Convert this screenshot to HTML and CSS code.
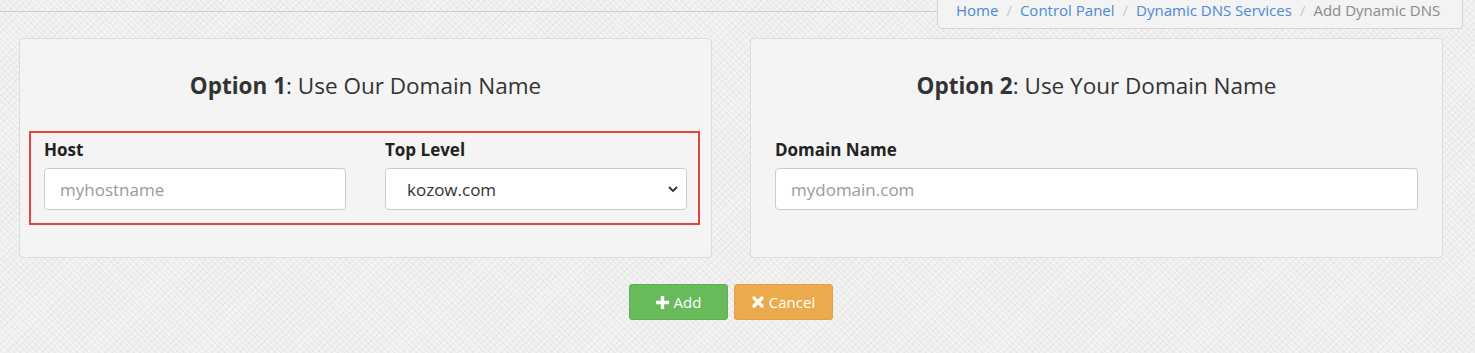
FILE: index.html
```html
<!DOCTYPE html>
<html>
<head>
<meta charset="utf-8">
<link rel="stylesheet" href="styles.css">
</head>
<body>
<div class="page">
  <div class="topbar">
    <div class="topline"></div>
    <ol class="breadcrumb">
      <li><a>Home</a></li>
      <li class="sep">/</li>
      <li><a>Control Panel</a></li>
      <li class="sep">/</li>
      <li><a>Dynamic DNS Services</a></li>
      <li class="sep">/</li>
      <li class="active">Add Dynamic DNS</li>
    </ol>
  </div>
  <div class="panels">
    <div class="panel">
      <h3 class="title"><b>Option 1</b>: Use Our Domain Name</h3>
      <div class="highlight">
        <div class="field">
          <label>Host</label>
          <input class="control" type="text" placeholder="myhostname">
        </div>
        <div class="field">
          <label>Top Level</label>
          <div class="select">
            <span>kozow.com</span>
            <svg class="chev" width="10" height="8" viewBox="0 0 10 8"><path d="M1 2 L5 6 L9 2" fill="none" stroke="#333" stroke-width="1.8"/></svg>
          </div>
        </div>
      </div>
    </div>
    <div class="panel panel2">
      <h3 class="title"><b>Option 2</b>: Use Your Domain Name</h3>
      <div class="field wide">
        <label>Domain Name</label>
        <input class="control" type="text" placeholder="mydomain.com">
      </div>
    </div>
  </div>
  <div class="actions">
    <button class="btn btn-add"><svg width="13" height="13" viewBox="0 0 13 13"><path d="M4.8 0h3.4v4.8H13v3.4H8.2V13H4.8V8.2H0V4.8h4.8z" fill="#fff"/></svg>Add</button>
    <button class="btn btn-cancel"><svg width="12" height="12" viewBox="0 0 12 12"><path d="M2 2 L10 10 M10 2 L2 10" stroke="#fff" stroke-width="3.2" stroke-linecap="round"/></svg>Cancel</button>
  </div>
</div>
</body>
</html>
```

FILE: styles.css
```css
html, body {
  margin: 0;
  padding: 0;
}
body {
  background-color: #ededed;
  background-image:
    repeating-linear-gradient(45deg, rgba(255,255,255,0.25) 0 2px, rgba(0,0,0,0.012) 2px 4px),
    repeating-linear-gradient(-45deg, rgba(255,255,255,0.2) 0 3px, rgba(0,0,0,0.01) 3px 5px);
  font-family: "Open Sans", "Noto Sans", sans-serif;
  color: #333;
  width: 1475px;
  height: 353px;
  overflow: hidden;
}
.page {
  width: 1462px;
}
.topbar {
  display: flex;
  align-items: flex-start;
  height: 29px;
}
.topline {
  flex: 1;
  height: 11px;
  border-bottom: 1px solid #cfcfcf;
}
.breadcrumb {
  list-style: none;
  margin: 0 -1px 0 0;
  padding: 0 0 0 18px;
  width: 506px;
  height: 28px;
  display: flex;
  align-items: center;
  background: #f3f3f3;
  border: 1px solid #d4d4d4;
  border-top: none;
  border-radius: 0 0 5px 5px;
  font-size: 15px;
  box-sizing: content-box;
}
.breadcrumb li {
  white-space: nowrap;
  line-height: 22px;
  margin-top: -9px;
}
.breadcrumb a {
  color: #4a8ad6;
}
.breadcrumb .sep {
  color: #c8c8c8;
  padding: 0 8px;
}
.breadcrumb .active {
  color: #8a8a8a;
}
.panels {
  display: flex;
  gap: 38px;
  padding: 0 19px;
  margin-top: 9px;
}
.panel {
  width: 693px;
  height: 220px;
  box-sizing: border-box;
  background: #f4f4f4;
  border: 1px solid #dcdcdc;
  border-radius: 4px;
  padding: 0 9px;
}
.panel2 {
  padding: 0 24px;
}
.title {
  margin: 32px 0 0;
  height: 30px;
  line-height: 30px;
  text-align: center;
  font-size: 22.5px;
  font-weight: 400;
  color: #333;
}
.title b {
  font-weight: 700;
}
.highlight {
  margin-top: 30px;
  width: 671px;
  border: 2px solid #e2463a;
  height: 94px;
  box-sizing: border-box;
  display: flex;
  gap: 39px;
  padding: 8px 0 0 13px;
}
.panel2 .field {
  margin-top: 40px;
}
.field {
  display: flex;
  flex-direction: column;
  width: 302px;
}
.field.wide {
  width: 643px;
}
label {
  display: block;
  font-size: 17px;
  font-weight: 700;
  letter-spacing: 0;
  line-height: 18px;
  height: 18px;
  margin-bottom: 9px;
  color: #222;
}
.control, .select {
  height: 42px;
  box-sizing: border-box;
  border: 1px solid #cccccc;
  border-radius: 4px;
  background: #fff;
  font-family: "Open Sans", "Noto Sans", sans-serif;
  font-size: 17px;
  padding: 0 15px;
  color: #333;
  width: 100%;
  outline: none;
  margin: 0;
}
.control::placeholder {
  color: #9a9a9a;
}
.select {
  display: flex;
  align-items: center;
  justify-content: space-between;
  padding: 0 8px 0 21px;
}
.chev {
  display: block;
}
.actions {
  display: flex;
  justify-content: center;
  gap: 6px;
  margin-top: 26px;
}
.btn {
  width: 99px;
  height: 36px;
  border-radius: 3px;
  border: 1px solid transparent;
  color: #fff;
  font-family: "Open Sans", "Noto Sans", sans-serif;
  font-size: 15px;
  display: flex;
  align-items: center;
  justify-content: center;
  gap: 5px;
  padding: 0;
}
.btn-add {
  background: #68ba5a;
  border-color: #5fae52;
}
.btn-cancel {
  background: #ebaa4b;
  border-color: #e3a040;
}
```
